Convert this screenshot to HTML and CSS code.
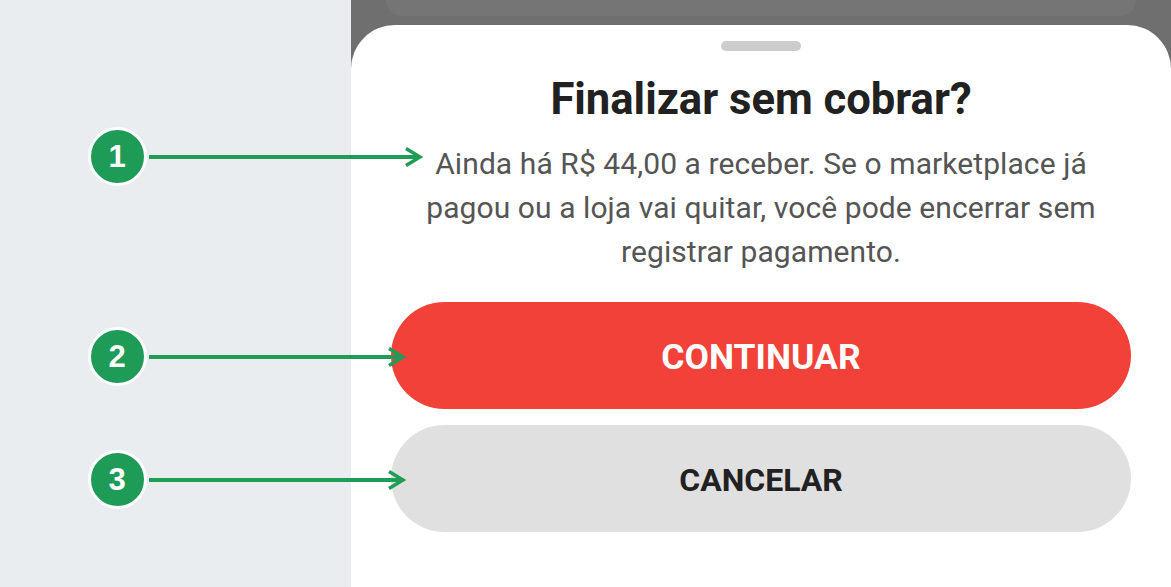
FILE: index.html
```html
<!DOCTYPE html>
<html lang="pt-BR">
<head>
  <meta charset="UTF-8">
  <title>Finalizar sem cobrar?</title>
  <link rel="stylesheet" href="styles.css">
</head>
<body>
  <div class="page">
    <div class="side"></div>
    <div class="phone">
      <div class="backdrop"><div class="behind-card"></div></div>
      <div class="sheet">
        <div class="handle"></div>
        <h2 class="title">Finalizar sem cobrar?</h2>
        <p class="message">Ainda há R$ 44,00 a receber. Se o marketplace já pagou ou a loja vai quitar, você pode encerrar sem registrar pagamento.</p>
        <button class="btn btn-danger"><span class="btn-label">CONTINUAR</span></button>
        <button class="btn btn-muted"><span class="btn-label">CANCELAR</span></button>
      </div>
    </div>
  </div>

  <!-- marcadores por cima da tela -->
  <div class="badge badge-1">1</div>
  <div class="badge badge-2">2</div>
  <div class="badge badge-3">3</div>
  <svg class="arrows" width="1171" height="587" viewBox="0 0 1171 587">
    <g fill="none" stroke="#1f9d57" stroke-width="4" shape-rendering="crispEdges">
      <path d="M149 157H418"/>
      <path d="M149 357H401"/>
      <path d="M149 480H401"/>
    </g>
    <g fill="none" stroke="#1f9d57" stroke-width="3.5">
      <path d="M406 148.500L420 157L406 165.500"/>
      <path d="M389 348.500L403 357L389 365.500"/>
      <path d="M389 471.500L403 480L389 488.500"/>
    </g>
  </svg>
</body>
</html>
```

FILE: styles.css
```css
html, body { margin: 0; padding: 0; height: 100%; overflow: hidden; }
body { font-family: Roboto, "Liberation Sans", sans-serif; background: #e9edf0; position: relative; }
.page { display: flex; height: 587px; }
.side { width: 351px; flex: none; background: #e9edf0; }
.phone { flex: 1; display: flex; flex-direction: column; background: #6f6f6f; }
.backdrop { height: 25px; flex: none; padding: 0 35px; box-sizing: border-box; }
.behind-card { height: 16px; background: #757575; border-radius: 0 0 20px 20px; }
.sheet { flex: 1; background: #fff; border-radius: 44px 44px 0 0; padding: 16px 40px 0; display: flex; flex-direction: column; align-items: center; }
.handle { width: 80px; height: 10px; border-radius: 5px; background: #ccc; flex: none; }
.title { margin: 21px 0 0; font-size: 43.6px; line-height: 56px; font-weight: 700; color: #212121; }
.message { margin: 14px 0 28px; font-size: 30px; line-height: 44px; font-weight: 400; color: #555; text-align: center; width: 700px; letter-spacing: 0.08px; }
.btn { width: 100%; height: 107px; flex: none; border: 0; border-radius: 54px; font-family: inherit; font-weight: 700; padding: 2px 0 0; }
.btn-danger { background: #f14138; color: #fff; font-size: 35.5px; }
.btn-muted { background: #e0e0e0; color: #212121; font-size: 32px; margin-top: 16px; }
.badge { position: absolute; left: 88px; width: 59px; height: 59px; box-sizing: border-box; border: 3px solid #fff; border-radius: 50%; background: #1f9b58; color: #fff; font-family: "Liberation Sans", sans-serif; font-weight: 700; font-size: 31px; padding-right: 1px; display: flex; align-items: center; justify-content: center; }
.badge-1 { top: 127px; }
.badge-2 { top: 327px; }
.badge-3 { top: 450px; }
.arrows { position: absolute; left: 0; top: 0; }
```
